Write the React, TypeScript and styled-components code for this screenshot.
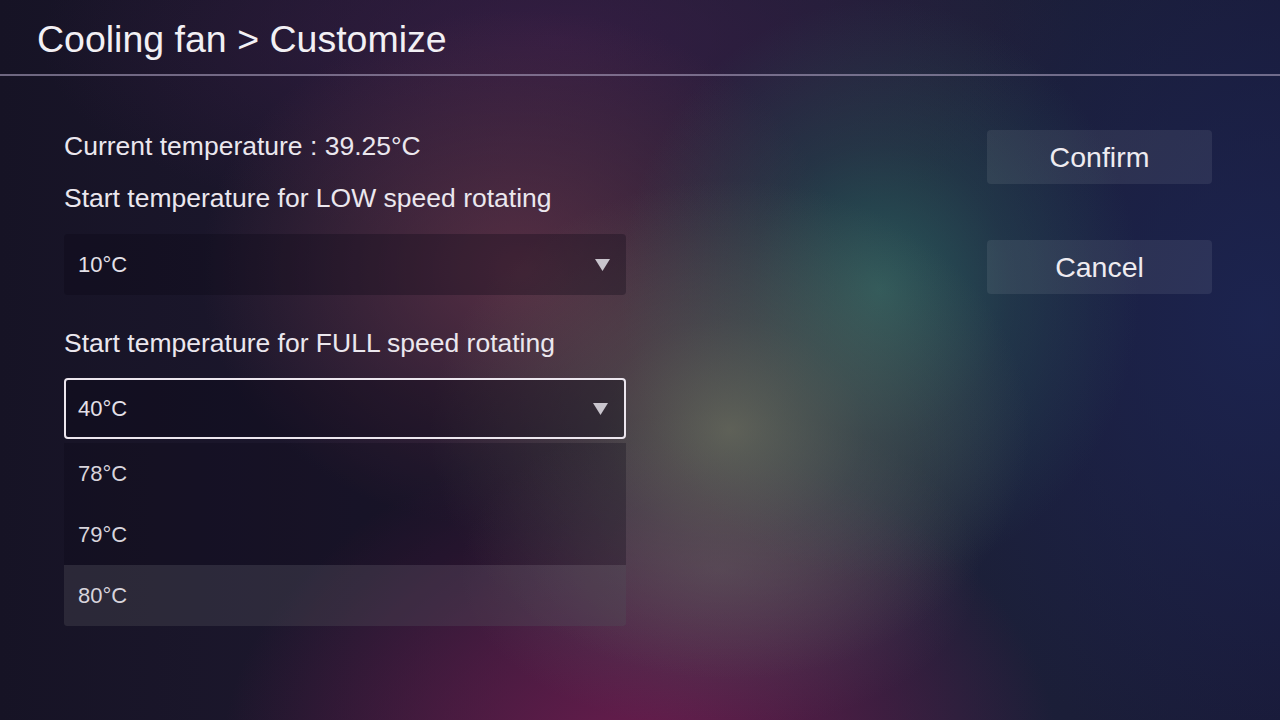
import React from "react";
import styled, { createGlobalStyle } from "styled-components";

const GlobalStyle = createGlobalStyle`
  html, body { margin: 0; padding: 0; }
  body {
    width: 1280px;
    height: 720px;
    overflow: hidden;
    font-family: "Liberation Sans", Arial, sans-serif;
    color: #ece8ef;
    background-color: #1b1a30;
    background-image:
      radial-gradient(ellipse 300px 250px at 730px 430px, rgba(108, 110, 94, 0.8), rgba(108,110,94,0.35) 45%, rgba(108,110,94,0) 100%),
      radial-gradient(ellipse 260px 290px at 880px 290px, rgba(44, 94, 94, 0.9), rgba(44,94,94,0.35) 50%, rgba(44,94,94,0) 100%),
      radial-gradient(ellipse 260px 160px at 720px 570px, rgba(96, 80, 98, 0.55), rgba(96,80,98,0) 100%),
      radial-gradient(ellipse 420px 330px at 640px 770px, rgba(108, 28, 78, 1), rgba(104,28,76,0.55) 50%, rgba(104,28,76,0) 100%),
      radial-gradient(ellipse 320px 260px at 520px 270px, rgba(100, 52, 72, 0.8), rgba(100,52,72,0) 100%),
      radial-gradient(ellipse 360px 460px at 1260px 320px, rgba(28, 36, 80, 0.95), rgba(28,36,80,0) 100%),
      radial-gradient(ellipse 520px 200px at 560px 40px, rgba(60, 30, 72, 0.7), rgba(60,30,72,0) 100%),
      linear-gradient(90deg, #161325 0%, #201a32 40%, #1c2038 75%, #191a38 100%);
  }
`;

const Page = styled.div`
  width: 1280px;
  height: 720px;
  display: flex;
  flex-direction: column;
`;

const Header = styled.header`
  height: 76px;
  display: flex;
  align-items: center;
  padding-left: 37px;
  box-sizing: border-box;
  border-bottom: 2px solid rgba(170, 160, 190, 0.6);
`;

const Title = styled.h1`
  margin: 0;
  margin-top: 4px;
  font-size: 37.5px;
  font-weight: 400;
  color: #f2f0f4;
`;

const Content = styled.main`
  display: grid;
  grid-template-columns: 562px 225px;
  column-gap: 361px;
  padding-left: 64px;
  padding-top: 54px;
`;

const Form = styled.section`
  display: flex;
  flex-direction: column;
`;

const Label = styled.div<{ $gap: number }>`
  font-size: 26.5px;
  line-height: 32px;
  height: 32px;
  color: #ebe7ee;
  margin-bottom: ${(p) => p.$gap}px;
`;

const Select = styled.div<{ $focused?: boolean; $gap: number }>`
  height: 61px;
  box-sizing: border-box;
  display: flex;
  align-items: center;
  justify-content: space-between;
  padding: 0 16px 0 ${(p) => (p.$focused ? 12 : 14)}px;
  border-radius: 4px;
  background: ${(p) => (p.$focused ? "rgba(10, 6, 20, 0.35)" : "rgba(10, 6, 20, 0.3)")};
  border: ${(p) => (p.$focused ? "2px solid #ece6ee" : "none")};
  margin-bottom: ${(p) => p.$gap}px;
`;

const Value = styled.span`
  font-size: 22px;
  color: #e4e0e8;
`;

const Arrow = styled.svg`
  width: 15px;
  height: 12px;
  display: block;
`;

const Dropdown = styled.ul`
  list-style: none;
  margin: 4px 0 0;
  padding: 0;
  background: rgba(12, 6, 20, 0.28);
  border-radius: 0 0 3px 3px;
  overflow: hidden;
`;

const Option = styled.li<{ $active?: boolean }>`
  height: 61px;
  display: flex;
  align-items: center;
  padding-left: 14px;
  box-sizing: border-box;
  font-size: 22px;
  color: #d8d4dc;
  background: ${(p) => (p.$active ? "rgba(255, 255, 255, 0.1)" : "transparent")};
`;

const Actions = styled.aside`
  display: flex;
  flex-direction: column;
  gap: 56px;
`;

const Button = styled.button`
  height: 54px;
  width: 225px;
  border: none;
  border-radius: 4px;
  background: rgba(255, 255, 255, 0.08);
  color: #eeebf0;
  font-family: "Liberation Sans", Arial, sans-serif;
  font-size: 28.5px;
  cursor: pointer;
  padding: 0;
`;

const Caret = () => (
  <Arrow viewBox="0 0 15 12">
    <polygon points="0,0 15,0 7.5,12" fill="#c9c5cd" />
  </Arrow>
);

export default function App() {
  return (
    <>
      <GlobalStyle />
      <Page>
        <Header>
          <Title>Cooling fan &gt; Customize</Title>
        </Header>
        <Content>
          <Form>
            <Label $gap={20}>Current temperature : 39.25°C</Label>
            <Label $gap={20}>Start temperature for LOW speed rotating</Label>
            <Select $gap={32}>
              <Value>10°C</Value>
              <Caret />
            </Select>
            <Label $gap={19}>Start temperature for FULL speed rotating</Label>
            <Select $focused $gap={0}>
              <Value>40°C</Value>
              <Caret />
            </Select>
            <Dropdown>
              <Option>78°C</Option>
              <Option>79°C</Option>
              <Option $active>80°C</Option>
            </Dropdown>
          </Form>
          <Actions>
            <Button>Confirm</Button>
            <Button>Cancel</Button>
          </Actions>
        </Content>
      </Page>
    </>
  );
}
